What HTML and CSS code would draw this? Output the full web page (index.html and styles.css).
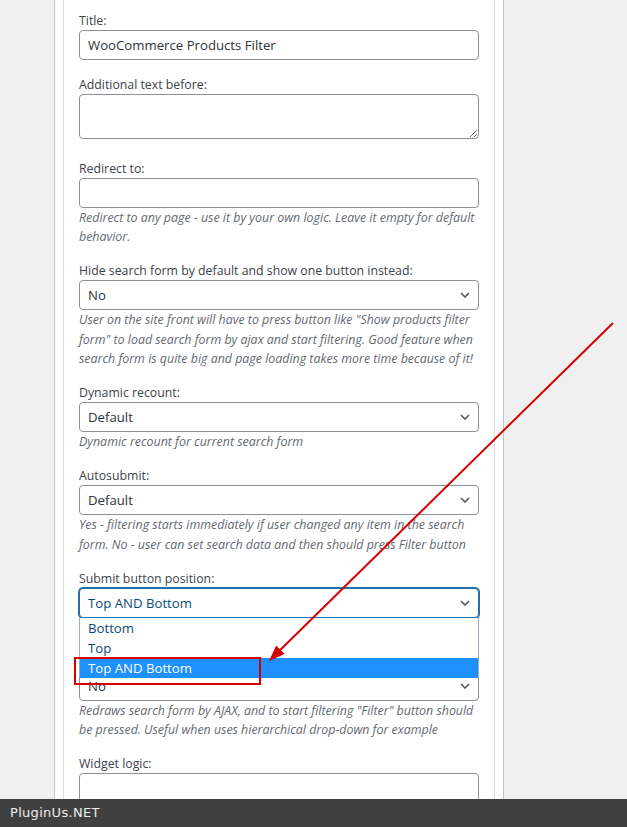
FILE: index.html
```html
<!DOCTYPE html>
<html>
<head>
<meta charset="utf-8">
<link rel="stylesheet" href="styles.css">
</head>
<body>
<div class="page">
  <div class="outer">
    <div class="inner">
      <div class="field field-title">
        <label class="lbl">Title:</label>
        <input class="text" type="text" value="WooCommerce Products Filter">
      </div>
      <div class="field field-area">
        <label class="lbl">Additional text before:</label>
        <textarea class="area"></textarea>
      </div>
      <div class="field">
        <label class="lbl">Redirect to:</label>
        <input class="text" type="text" value="">
        <p class="desc">Redirect to any page - use it by your own logic. Leave it empty for default behavior.</p>
      </div>
      <div class="field">
        <label class="lbl">Hide search form by default and show one button instead:</label>
        <div class="select"><span>No</span><svg class="chev" width="10" height="6" viewBox="0 0 10 6"><path d="M1 1l4 4 4-4" fill="none" stroke="#50575e" stroke-width="1.6"/></svg></div>
        <p class="desc">User on the site front will have to press button like "Show products filter form" to load search form by ajax and start filtering. Good feature when search form is quite big and page loading takes more time because of it!</p>
      </div>
      <div class="field">
        <label class="lbl">Dynamic recount:</label>
        <div class="select"><span>Default</span><svg class="chev" width="10" height="6" viewBox="0 0 10 6"><path d="M1 1l4 4 4-4" fill="none" stroke="#50575e" stroke-width="1.6"/></svg></div>
        <p class="desc">Dynamic recount for current search form</p>
      </div>
      <div class="field">
        <label class="lbl">Autosubmit:</label>
        <div class="select"><span>Default</span><svg class="chev" width="10" height="6" viewBox="0 0 10 6"><path d="M1 1l4 4 4-4" fill="none" stroke="#50575e" stroke-width="1.6"/></svg></div>
        <p class="desc">Yes - filtering starts immediately if user changed any item in the search form. No - user can set search data and then should press Filter button</p>
      </div>
      <div class="field field-open">
        <label class="lbl">Submit button position:</label>
        <div class="select select-focus"><span>Top AND Bottom</span><svg class="chev" width="10" height="6" viewBox="0 0 10 6"><path d="M1 1l4 4 4-4" fill="none" stroke="#50575e" stroke-width="1.6"/></svg>
          <ul class="list">
            <li class="opt">Bottom</li>
            <li class="opt">Top</li>
            <li class="opt opt-on">Top AND Bottom</li>
          </ul>
        </div>
        <p class="desc">Where to place submit button</p>
      </div>
      <div class="field">
        <label class="lbl">Ajax redraw:</label>
        <div class="select"><span>No</span><svg class="chev" width="10" height="6" viewBox="0 0 10 6"><path d="M1 1l4 4 4-4" fill="none" stroke="#50575e" stroke-width="1.6"/></svg></div>
        <p class="desc">Redraws search form by AJAX, and to start filtering "Filter" button should be pressed. Useful when uses hierarchical drop-down for example</p>
      </div>
      <div class="field">
        <label class="lbl">Widget logic:</label>
        <textarea class="area"></textarea>
      </div>
    </div>
  </div>
</div>
<svg class="annot" width="627" height="827" viewBox="0 0 627 827">
  <line x1="613" y1="323" x2="280.4" y2="649.8" stroke="#d40000" stroke-width="2"/>
  <polygon points="269,661 284.6,654.1 276.2,645.5" fill="#d40000"/>
  <rect x="75" y="658" width="185" height="26" fill="none" stroke="#d40000" stroke-width="2"/>
</svg>
<div class="footer">PluginUs.NET</div>
</body>
</html>
```
FILE: styles.css
```css
html, body {
  margin: 0;
  padding: 0;
}
body {
  background: #f0f0f1;
  font-family: "Open Sans", "Noto Sans", sans-serif;
  color: #2c3338;
  height: 827px;
  overflow: hidden;
}
.page {
  padding-left: 54px;
  height: 827px;
}
.outer {
  height: 100%;
  background: #fff;
  border-left: 1px solid #c3c4c7;
  border-right: 1px solid #c3c4c7;
  padding: 0 8px;
  box-sizing: content-box;
  width: 432px;
}
.inner {
  height: 100%;
  border-left: 1px solid #dcdcde;
  border-right: 1px solid #dcdcde;
  padding: 10.5px 15px 0;
}
.field {
  margin-bottom: 14.5px;
}
.field-title {
  margin-bottom: 15px;
}
.field-area {
  margin-bottom: 20px;
}
.lbl {
  display: block;
  font-size: 12.3px;
  line-height: 19px;
  color: #3c434a;
}
.text, .area, .select {
  display: block;
  box-sizing: border-box;
  width: 400px;
  margin: 0;
  border: 1px solid #8c8f94;
  border-radius: 4px;
  background: #fff;
  font-family: "Open Sans", "Noto Sans", sans-serif;
  font-size: 13.2px;
  color: #2c3338;
}
.text {
  height: 30px;
  padding: 0 8px;
  outline: none;
}
.area {
  height: 45px;
  padding: 4px 8px;
  resize: vertical;
  outline: none;
}
.select {
  position: relative;
  height: 30px;
  padding: 0 8px;
  display: flex;
  align-items: center;
  justify-content: space-between;
}
.select span {
  line-height: 28px;
}
.select-focus {
  border-color: #2271b1;
  box-shadow: 0 0 0 1px #2271b1;
  color: #0a4b78;
}
.list {
  position: absolute;
  top: 100%;
  left: -1px;
  right: -1px;
  margin: 1px 0 0;
  padding: 0;
  list-style: none;
  background: #fff;
  border: 1px solid #9aabc4;
  border-top: none;
  border-bottom: none;
  z-index: 5;
}
.opt {
  height: 20px;
  line-height: 20px;
  padding-left: 8px;
  font-size: 13.2px;
  color: #0a4b78;
}
.opt-on {
  background: #1e90ff;
  color: #fff;
}
.desc {
  margin: 0;
  font-size: 12.4px;
  font-style: italic;
  line-height: 19.5px;
  color: #646970;
}
.annot {
  position: absolute;
  left: 0;
  top: 0;
  pointer-events: none;
  z-index: 10;
}
.footer {
  position: fixed;
  left: 0;
  right: 0;
  bottom: 0;
  height: 28px;
  background: #404040;
  color: #ececec;
  font-family: "DejaVu Sans", sans-serif;
  font-size: 13px;
  letter-spacing: 0.3px;
  line-height: 28px;
  padding-left: 10px;
  z-index: 20;
}
```
